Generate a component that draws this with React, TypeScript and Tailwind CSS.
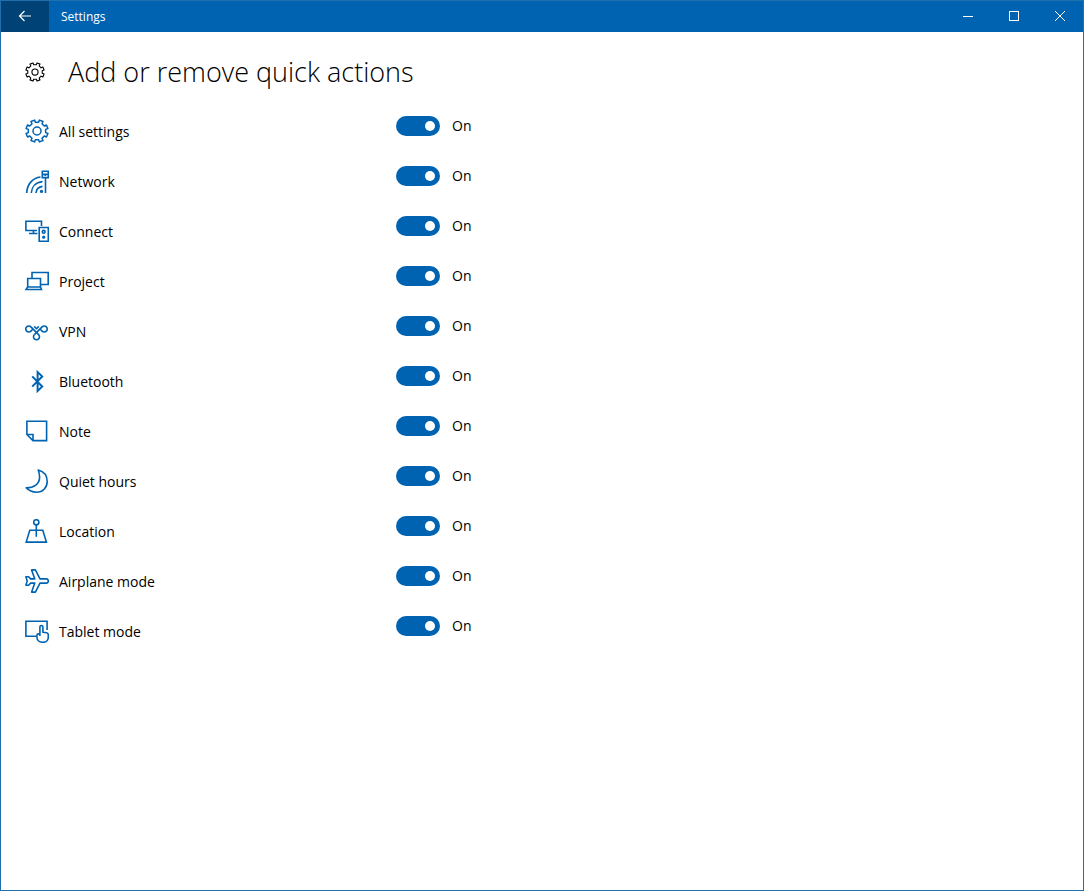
import { useState, type ReactNode } from "react";

type QuickAction = {
  id: string;
  label: string;
  icon: ReactNode;
};

// Outline of an eight-toothed gear centred in a 24x24 box.
function gearPath() {
  const points: string[] = [];
  const at = (deg: number, r: number) => {
    const a = (deg * Math.PI) / 180;
    return `${(12 + r * Math.cos(a)).toFixed(2)} ${(12 + r * Math.sin(a)).toFixed(2)}`;
  };
  for (let i = 0; i < 8; i++) {
    const mid = 22.5 + i * 45;
    points.push(at(mid - 12, 8.8), at(mid - 10, 11.2));
    points.push(at(mid + 10, 11.2), at(mid + 12, 8.8));
  }
  return `M${points.join("L")}Z`;
}

const GEAR = gearPath();

function Icon({ children }: { children: ReactNode }) {
  return (
    <svg
      viewBox="0 0 24 24"
      className="size-6 shrink-0"
      fill="none"
      stroke="currentColor"
      strokeWidth="1.6"
      aria-hidden="true"
    >
      {children}
    </svg>
  );
}

const ACTIONS: QuickAction[] = [
  {
    id: "all-settings",
    label: "All settings",
    icon: (
      <g strokeWidth="1.5">
        <path d={GEAR} strokeLinejoin="round" />
        <circle cx="12" cy="12" r="4" />
      </g>
    ),
  },
  {
    id: "network",
    label: "Network",
    icon: (
      <>
        <path d="M1.7 24C2 15.5 7.5 8.8 15.5 8M6.3 24C6.6 18 10.5 13.2 17.5 12.6M11 24C11.3 20.5 13.5 18 17.5 17.4" />
        <circle cx="16.5" cy="22.4" r="1.6" fill="currentColor" stroke="none" />
        <path d="M17.3 2.2h6v6.4h-6zM17.3 5.4h6M20.3 5.4v1.6M20.5 8.6V24" />
      </>
    ),
  },
  {
    id: "connect",
    label: "Connect",
    icon: (
      <>
        <path d="M16.5 7V2.3H.9V11.5H12M8.5 11.5v3M4 14.5h8.5" />
        <path d="M14.2 8.5h9.1v13.8h-9.1z" />
        <circle cx="18.7" cy="12.8" r="1.4" />
        <circle cx="18.7" cy="18.2" r="1.6" fill="currentColor" stroke="none" />
      </>
    ),
  },
  {
    id: "project",
    label: "Project",
    icon: (
      <path d="M7 9V3.5h16.2v12H16M2.7 18V9.5h12.8V18zM2.7 18L.9 20.5h15.6L15.5 18" />
    ),
  },
  {
    id: "vpn",
    label: "VPN",
    icon: (
      <>
        <path d="M9.4 15.6a3 3 0 1 0 4.2 0L5.9 7.9a3 3 0 1 0 0 4.2l1.6-1.6" />
        <path d="M9.4 15.6L17.1 7.9a3 3 0 1 1 0 4.2l-1.6-1.6" />
        <path d="M9.2 7.4L11.5 9.7L13.8 7.4" />
      </>
    ),
  },
  {
    id: "bluetooth",
    label: "Bluetooth",
    icon: <path d="M7.2 7.4L17.2 17.6L12.6 22V3L17.2 7.4L7.2 17.6" strokeWidth="2" />,
  },
  {
    id: "note",
    label: "Note",
    icon: <path d="M1.9 2.2h19.7v19.4H8L1.9 15.5zM1.9 15.5H8v6.1" />,
  },
  {
    id: "quiet-hours",
    label: "Quiet hours",
    icon: (
      <path
        d="M13.2 1C19 2.5 22.2 7 22.2 12.6C22.2 18.8 17.6 23.2 11.7 23.2C7.3 23.2 3.6 21.5 1.2 18.8C9 18.8 14.6 15 14.6 8.2C14.6 5.4 14 3 13.2 1Z"
        strokeLinejoin="round"
      />
    ),
  },
  {
    id: "location",
    label: "Location",
    icon: (
      <>
        <circle cx="11.3" cy="3.3" r="2.6" />
        <path d="M11.3 6v11.8M4.8 11.2h13L21.4 23.1H1.2z" />
      </>
    ),
  },
  {
    id: "airplane-mode",
    label: "Airplane mode",
    icon: (
      <path
        d="M.9 7.7h2.7l2 2.2h4.2L6.6 .9h3.8l4.6 9h6.2a2.1 2.1 0 0 1 0 4.2H15l-4.6 9H6.6l3.2-9H5.6l-2 2.2H.9L2.2 12z"
        strokeLinejoin="round"
      />
    ),
  },
  {
    id: "tablet-mode",
    label: "Tablet mode",
    icon: (
      <>
        <path d="M11 17.2H.9V2.2h21.2V11" />
        <path
          d="M14.9 17V8a1.5 1.5 0 0 1 3 0v5.2l3.7.6c1.1.2 1.7 1 1.7 2V18c0 3.2-2.2 5.3-5.3 5.3c-3.5 0-6.1-2-6.1-5.3v-1.6c0-1 .8-1.5 1.6-1.5h1.4"
          strokeLinejoin="round"
        />
      </>
    ),
  },
];

function TitleBar() {
  return (
    <header className="flex h-[31px] items-stretch bg-[#0063b1] text-white">
      <button type="button" aria-label="Back" className="flex w-12 items-center justify-center bg-[#004275] pb-0.5">
        <svg viewBox="0 0 14 14" className="size-[14px]" fill="none" stroke="currentColor" strokeWidth="1.2" aria-hidden="true">
          <path d="M13 7H1.5M6.5 2L1.5 7L6.5 12" />
        </svg>
      </button>
      <span className="flex flex-1 items-center pl-3 text-[12px]">Settings</span>
      <button type="button" aria-label="Minimize" className="flex w-[46px] items-center justify-center pb-0.5">
        <svg viewBox="0 0 10 10" className="size-[10px]" stroke="currentColor" aria-hidden="true">
          <path d="M0 5.5h10" />
        </svg>
      </button>
      <button type="button" aria-label="Maximize" className="flex w-[46px] items-center justify-center pb-0.5">
        <span className="size-[10px] border border-white" />
      </button>
      <button type="button" aria-label="Close" className="flex w-[46px] items-center justify-center pb-0.5">
        <svg viewBox="0 0 10 10" className="size-[10px]" stroke="currentColor" aria-hidden="true">
          <path d="M0 0L10 10M10 0L0 10" />
        </svg>
      </button>
    </header>
  );
}

function ActionRow({ action }: { action: QuickAction }) {
  const [on, setOn] = useState(true);

  return (
    <li className="flex h-[50px] items-center">
      <label htmlFor={action.id} className="flex w-[371px] items-center gap-[10px]">
        <span className="text-[#0063b1]">
          <Icon>{action.icon}</Icon>
        </span>
        {action.label}
      </label>
      <div className="flex items-center gap-3 pb-[10px]">
        <input
          id={action.id}
          type="checkbox"
          role="switch"
          checked={on}
          onChange={(e) => setOn(e.target.checked)}
          className="flex h-5 w-11 appearance-none items-center rounded-full bg-gray-400 px-[5px] before:size-[10px] before:rounded-full before:bg-white checked:justify-end checked:bg-[#0063b1]"
        />
        <span className="leading-5">{on ? "On" : "Off"}</span>
      </div>
    </li>
  );
}

export default function App() {
  return (
    <div className="flex min-h-screen flex-col border border-[#1f70ac] bg-white font-['Open_Sans','Noto_Sans',sans-serif] text-[14px] text-black">
      <TitleBar />
      <main className="flex-1 px-6 pt-5">
        <h1 className="flex h-10 items-center gap-[23px] text-[27px] font-light">
          <svg viewBox="0 0 24 24" className="size-5 shrink-0" fill="none" stroke="currentColor" strokeWidth="1.3" aria-hidden="true">
            <path d={GEAR} strokeLinejoin="round" />
            <circle cx="12" cy="12" r="3.7" />
          </svg>
          Add or remove quick actions
        </h1>
        <ul className="mt-[14px]">
          {ACTIONS.map((action) => (
            <ActionRow key={action.id} action={action} />
          ))}
        </ul>
      </main>
    </div>
  );
}
